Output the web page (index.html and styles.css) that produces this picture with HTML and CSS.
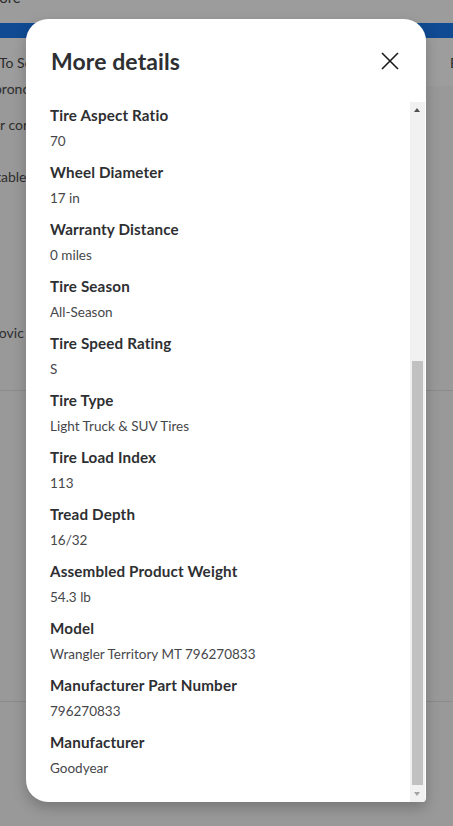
FILE: index.html
```html
<!DOCTYPE html>
<html lang="en">
<head>
    <meta charset="UTF-8">
    <meta name="viewport" content="width=device-width, initial-scale=1.0">
    <title>More details</title>
    <link rel="stylesheet" href="styles.css">
</head>
<body>
    <div class="page">
        <div class="topbar"><span>Store</span></div>
        <div class="bluebar"></div>
        <div class="tabs">
            <span>To Sc</span>
            <span>B</span>
        </div>
        <div class="page-text">
            <p class="l1">pronc</p>
            <p class="l2">r cor</p>
            <p class="l3">table</p>
            <p class="l4">rovic</p>
        </div>
        <div class="rule rule-a"></div>
        <div class="rule rule-b"></div>
    </div>

    <div class="modal">
        <div class="modal-header">
            <h2>More details</h2>
            <button class="close" aria-label="Close">
                <svg width="18" height="18" viewBox="0 0 18 18">
                    <path d="M1 1 L17 17 M17 1 L1 17" stroke="#1a1a1a" stroke-width="1.6" fill="none"/>
                </svg>
            </button>
        </div>
        <div class="modal-body">
            <div class="details">
                <div class="detail"><strong>Tire Aspect Ratio</strong><span>70</span></div>
                <div class="detail"><strong>Wheel Diameter</strong><span>17 in</span></div>
                <div class="detail"><strong>Warranty Distance</strong><span>0 miles</span></div>
                <div class="detail"><strong>Tire Season</strong><span>All-Season</span></div>
                <div class="detail"><strong>Tire Speed Rating</strong><span>S</span></div>
                <div class="detail"><strong>Tire Type</strong><span>Light Truck &amp; SUV Tires</span></div>
                <div class="detail"><strong>Tire Load Index</strong><span>113</span></div>
                <div class="detail"><strong>Tread Depth</strong><span>16/32</span></div>
                <div class="detail"><strong>Assembled Product Weight</strong><span>54.3 lb</span></div>
                <div class="detail"><strong>Model</strong><span>Wrangler Territory MT 796270833</span></div>
                <div class="detail"><strong>Manufacturer Part Number</strong><span>796270833</span></div>
                <div class="detail"><strong>Manufacturer</strong><span>Goodyear</span></div>
            </div>
            <div class="scrollbar">
                <div class="arrow up"></div>
                <div class="track">
                    <div class="thumb"></div>
                </div>
                <div class="arrow down"></div>
            </div>
        </div>
    </div>
</body>
</html>
```

FILE: styles.css
```css
body {
    margin: 0;
    font-family: Lato, "Noto Sans", sans-serif;
    background-color: #999;
    color: #2a2a2a;
    overflow: hidden;
}
.page {
    height: 826px;
    position: relative;
}
.topbar {
    height: 23px;
    background-color: #9c9c9c;
    font-size: 15px;
    overflow: hidden;
}
.topbar span {
    display: block;
    margin-top: -12px;
    margin-left: -14px;
    color: #2c2c2c;
}
.bluebar {
    height: 15px;
    background-color: #0f4a92;
}
.tabs {
    height: 48px;
    display: flex;
    justify-content: space-between;
    align-items: center;
    background-color: #9d9d9d;
    font-size: 14px;
    color: #2c2c2c;
}
.tabs span:first-child {
    margin-left: -1px;
}
.tabs span:last-child {
    margin-right: -6px;
}
.page-text {
    font-size: 14px;
    color: #2e2e2e;
}
.page-text p {
    margin: 0;
    line-height: 18px;
    margin-left: -6px;
}
.page-text .l1 { margin-top: -6px; }
.page-text .l2 { margin-top: 18px; margin-left: 0; }
.page-text .l3 { margin-top: 34px; margin-left: -4px; }
.page-text .l4 { margin-top: 138px; }
.rule {
    height: 1px;
    background-color: #8b8b8b;
    margin-top: 48px;
}
.rule-b {
    margin-top: 310px;
}

.modal {
    position: absolute;
    left: 26px;
    top: 19px;
    width: 400px;
    height: 783px;
    background: #fff;
    border-radius: 22px 22px 4px 22px;
    box-shadow: 0 6px 14px rgba(0, 0, 0, 0.22);
    display: flex;
    flex-direction: column;
    overflow: hidden;
}
.modal-header {
    height: 83px;
    display: flex;
    align-items: center;
    justify-content: space-between;
    padding: 0 27px 0 25px;
    flex-shrink: 0;
}
.modal-header h2 {
    margin: 0;
    font-size: 23px;
    font-weight: 700;
    color: #2e2f32;
    letter-spacing: 0.1px;
}
.close {
    border: none;
    background: none;
    padding: 0;
    width: 18px;
    height: 18px;
    cursor: pointer;
}
.modal-body {
    flex: 1;
    display: flex;
    min-height: 0;
}
.details {
    flex: 1;
    padding: 3px 0 0 24px;
}
.detail {
    margin-bottom: 11px;
}
.detail strong {
    display: block;
    font-size: 15.2px;
    letter-spacing: 0.15px;
    line-height: 20px;
    color: #2e2f32;
    margin-bottom: 6px;
}
.detail span {
    display: block;
    font-size: 13.5px;
    line-height: 20px;
    color: #46474a;
}
.scrollbar {
    width: 15px;
    margin-right: 1px;
    background-color: #f1f1f1;
    display: flex;
    flex-direction: column;
}
.arrow {
    height: 17px;
    position: relative;
}
.arrow::after {
    content: "";
    position: absolute;
    left: 4px;
    border-left: 3.5px solid transparent;
    border-right: 3.5px solid transparent;
}
.arrow.up::after {
    top: 6px;
    border-bottom: 4px solid #505050;
}
.arrow.down::after {
    top: 7px;
    border-top: 4px solid #a3a3a3;
}
.track {
    flex: 1;
    display: flex;
    flex-direction: column;
    justify-content: flex-end;
    padding: 0 2px;
}
.thumb {
    height: 424px;
    background-color: #c1c1c1;
}
```
